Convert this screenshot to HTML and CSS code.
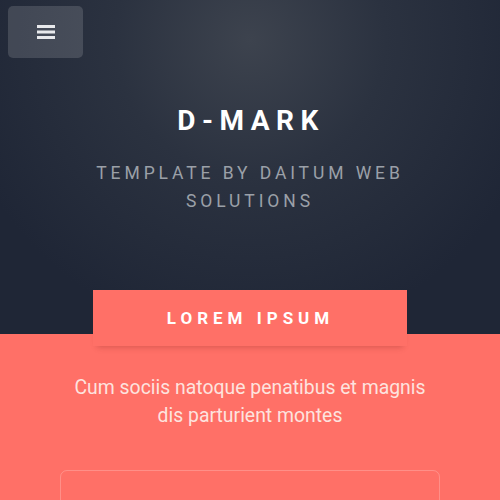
FILE: index.html
```html
<!DOCTYPE html>
<html>
<head>
<meta charset="utf-8">
<link rel="stylesheet" href="styles.css">
</head>
<body>
<header class="hero">
  <button class="menu-btn" aria-label="menu">
    <svg width="18" height="14" viewBox="0 0 18 14"><rect x="0" y="0" width="18" height="3" fill="#e8e9ec"/><rect x="0" y="5.5" width="18" height="3" fill="#e8e9ec"/><rect x="0" y="11" width="18" height="3" fill="#e8e9ec"/></svg>
  </button>
  <h1 class="title">D-MARK</h1>
  <p class="subtitle">TEMPLATE BY DAITUM WEB SOLUTIONS</p>
</header>
<section class="coral">
  <div class="tab">LOREM IPSUM</div>
  <p class="lead">Cum sociis natoque penatibus et magnis dis parturient montes</p>
  <div class="card"></div>
</section>
</body>
</html>
```
FILE: styles.css
```css
* { box-sizing: border-box; }
html, body { margin: 0; padding: 0; }
body {
  font-family: Roboto, "Liberation Sans", sans-serif;
  background: #ff7067;
  overflow: hidden;
  height: 500px;
}
.hero {
  position: relative;
  height: 334px;
  background: radial-gradient(ellipse 300px 300px at 250px 40px, #3d434e 0%, #2b3240 45%, #1f2636 100%);
  padding-top: 104px;
  text-align: center;
}
.menu-btn {
  position: absolute;
  left: 8px;
  top: 6px;
  width: 75px;
  height: 52px;
  border: none;
  border-radius: 5px;
  background: rgba(255,255,255,0.14);
  display: flex;
  align-items: center;
  justify-content: center;
  padding: 0;
  margin: 0;
}
.title {
  margin: 0;
  color: #ffffff;
  font-size: 28px;
  font-weight: 700;
  letter-spacing: 6.5px;
  line-height: 34px;
  padding-left: 2px;
}
.subtitle {
  margin: 21px auto 0;
  width: 340px;
  color: #9ba0a8;
  font-size: 17.5px;
  letter-spacing: 3.9px;
  line-height: 28px;
  padding-left: 0;
}
.coral {
  position: relative;
  text-align: center;
}
.tab {
  position: relative;
  margin: -44px auto 0;
  width: 314px;
  height: 56px;
  background: #ff7067;
  color: #fff;
  font-weight: 700;
  font-size: 17px;
  letter-spacing: 5px;
  line-height: 56px;
  padding-left: 1px;
  box-shadow: 0 5px 6px -4px rgba(120,30,25,0.3);
}
.lead {
  margin: 28px auto 0;
  width: 370px;
  color: #fde3df;
  font-size: 19.4px;
  line-height: 28px;
}
.card {
  margin: 40px auto 0;
  width: 380px;
  height: 100px;
  border: 1.5px solid rgba(255,255,255,0.22);
  border-radius: 7px;
}
```
